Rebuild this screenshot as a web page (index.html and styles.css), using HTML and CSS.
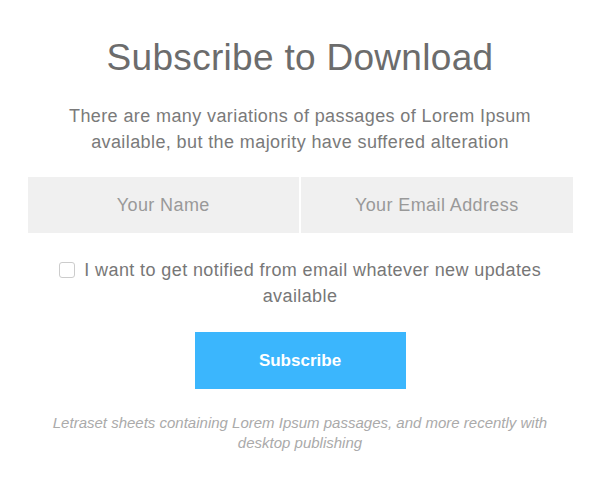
FILE: index.html
```html
<!DOCTYPE html>
<html>
<head>
<meta charset="utf-8">
<link rel="stylesheet" href="styles.css">
</head>
<body>
<section class="subscribe">
  <h1 class="title">Subscribe to Download</h1>
  <p class="lead">There are many variations of passages of Lorem Ipsum available, but the majority have suffered alteration</p>
  <form class="form">
    <div class="fields">
      <input class="field" type="text" placeholder="Your Name">
      <input class="field" type="email" placeholder="Your Email Address">
    </div>
    <label class="consent"><span class="box"></span> I want to get notified from email whatever new updates available</label>
    <button class="btn" type="button">Subscribe</button>
  </form>
  <p class="note">Letraset sheets containing Lorem Ipsum passages, and more recently with desktop publishing</p>
</section>
</body>
</html>
```

FILE: styles.css
```css
* { box-sizing: border-box; }
html, body { margin: 0; padding: 0; background: #fff; }
body { font-family: "Liberation Sans", Arial, sans-serif; }
.subscribe {
  width: 545px;
  margin: 0 auto;
  padding-top: 37px;
  text-align: center;
}
.title {
  margin: 0;
  font-size: 37px;
  font-weight: 400;
  line-height: 42px;
  letter-spacing: 0.3px;
  color: #6c6c6c;
}
.lead {
  margin: 24px 0 0;
  padding: 0 20px;
  font-size: 18px;
  line-height: 26px;
  letter-spacing: 0.4px;
  color: #7a7a7a;
}
.form { margin-top: 22px; }
.fields {
  display: flex;
  gap: 2px;
}
.field {
  flex: 1;
  height: 56px;
  border: 0;
  background: #f0f0f0;
  font-family: inherit;
  font-size: 18px;
  letter-spacing: 0.4px;
  text-align: center;
  color: #888;
  outline: none;
}
.field::placeholder { color: #999; }
.consent {
  display: block;
  margin: 24px 0 0;
  padding: 0 20px;
  font-size: 18px;
  line-height: 26px;
  letter-spacing: 0.4px;
  color: #777;
}
.box {
  display: inline-block;
  width: 16px;
  height: 16px;
  border: 1px solid #ccc;
  border-radius: 3px;
  vertical-align: -2px;
  margin-right: 4px;
}
.btn {
  display: block;
  width: 211px;
  height: 57px;
  margin: 23px auto 0;
  border: 0;
  background: #3bb6fd;
  color: #fff;
  font-family: inherit;
  font-weight: 700;
  font-size: 17px;
}
.note {
  margin: 24px 0 0;
  padding: 0 10px;
  font-size: 15px;
  font-style: italic;
  line-height: 20px;
  letter-spacing: 0;
  color: #aaa;
}
```
